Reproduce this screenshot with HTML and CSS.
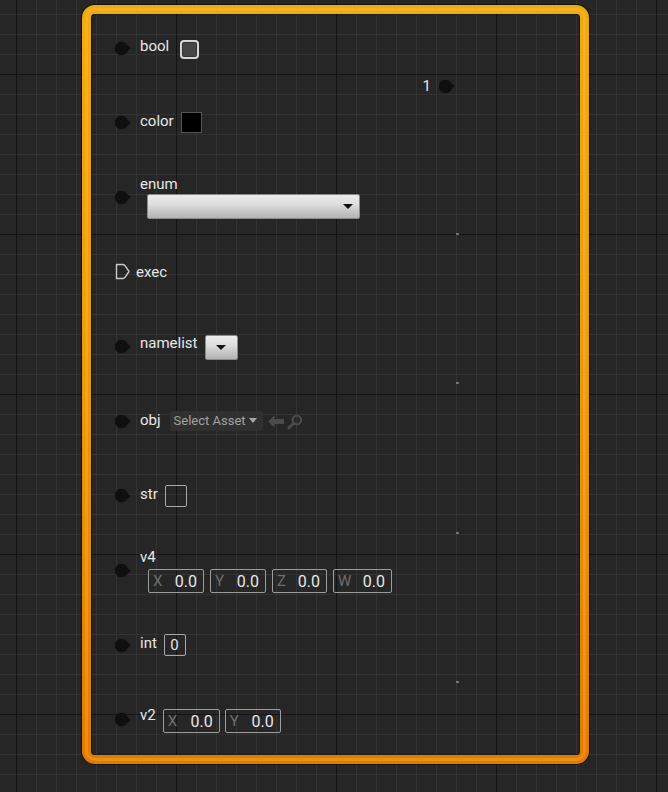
FILE: index.html
```html
<!DOCTYPE html>
<html>
<head>
<meta charset="utf-8">
<link rel="stylesheet" href="styles.css">
</head>
<body>
<div class="node">
  <div class="inputs">
    <div class="row">
      <span class="pin"></span>
      <div class="content">
        <span class="label">bool</span>
        <span class="checkbox"></span>
      </div>
    </div>
    <div class="row">
      <span class="pin"></span>
      <div class="content">
        <span class="label">color</span>
        <span class="swatch"></span>
      </div>
    </div>
    <div class="row">
      <span class="pin"></span>
      <div class="content stack">
        <span class="label">enum</span>
        <span class="combo wide"><span class="tri"></span></span>
      </div>
    </div>
    <div class="row">
      <svg class="exec-pin" width="16" height="17" viewBox="0 0 16 17"><path d="M1.5 1.5 H8 Q9 1.5 10 2.7 L14 8.5 L10 14.3 Q9 15.5 8 15.5 H1.5 Z" fill="none" stroke="#c9c9c9" stroke-width="1.4" stroke-linejoin="round"/></svg>
      <div class="content">
        <span class="label">exec</span>
      </div>
    </div>
    <div class="row">
      <span class="pin"></span>
      <div class="content">
        <span class="label">namelist</span>
        <span class="combo small"><span class="tri"></span></span>
      </div>
    </div>
    <div class="row">
      <span class="pin"></span>
      <div class="content">
        <span class="label">obj</span>
        <span class="asset">Select Asset<span class="tri light"></span></span>
        <span class="asset-icons">
          <svg width="16" height="13" viewBox="0 0 16 13"><path d="M0 6.5 L6.5 0.5 V4 H16 V9 H6.5 V12.5 Z" fill="#4b4b4b"/></svg>
          <svg width="16" height="16" viewBox="0 0 16 16"><circle cx="9.8" cy="6" r="4.3" fill="none" stroke="#4b4b4b" stroke-width="2.2"/><path d="M6.8 9 L2 13.8" stroke="#4b4b4b" stroke-width="3" stroke-linecap="round"/></svg>
        </span>
      </div>
    </div>
    <div class="row">
      <span class="pin"></span>
      <div class="content">
        <span class="label">str</span>
        <span class="textbox"></span>
      </div>
    </div>
    <div class="row">
      <span class="pin"></span>
      <div class="content stack">
        <span class="label">v4</span>
        <div class="fields indent">
          <span class="field w56"><span class="axis">X</span><span class="val">0.0</span></span>
          <span class="field w56"><span class="axis">Y</span><span class="val">0.0</span></span>
          <span class="field w55"><span class="axis">Z</span><span class="val">0.0</span></span>
          <span class="field w59"><span class="axis">W</span><span class="val">0.0</span></span>
        </div>
      </div>
    </div>
    <div class="row">
      <span class="pin"></span>
      <div class="content">
        <span class="label">int</span>
        <span class="textbox num">0</span>
      </div>
    </div>
    <div class="row">
      <span class="pin"></span>
      <div class="content">
        <span class="label">v2</span>
        <div class="fields v2">
          <span class="field w57"><span class="axis">X</span><span class="val">0.0</span></span>
          <span class="field w56"><span class="axis">Y</span><span class="val">0.0</span></span>
        </div>
      </div>
    </div>
  </div>
  <div class="outputs">
    <div class="orow">
      <span class="label">1</span>
      <span class="pin"></span>
    </div>
  </div>
  <span class="dot d1"></span>
  <span class="dot d2"></span>
  <span class="dot d3"></span>
  <span class="dot d4"></span>
</div>
</body>
</html>
```
FILE: styles.css
```css
html, body {
  margin: 0;
  padding: 0;
}
body {
  width: 668px;
  height: 792px;
  overflow: hidden;
  font-family: Roboto, "Liberation Sans", sans-serif;
  background-color: #262626;
  background-image:
    linear-gradient(90deg, #141414 1px, transparent 1px),
    linear-gradient(180deg, #141414 1px, transparent 1px),
    linear-gradient(90deg, #333333 1px, transparent 1px),
    linear-gradient(180deg, #333333 1px, transparent 1px);
  background-size: 160px 100%, 100% 160px, 20px 100%, 100% 20px;
  background-position: 16px 0, 0 74px, 16px 0, 0 14px;
  padding-top: 5px;
  box-sizing: border-box;
}
.node {
  position: relative;
  margin-left: 82px;
  width: 507px;
  height: 759px;
  box-sizing: border-box;
  border: 9px solid transparent;
  border-radius: 13px;
  display: flex;
  background-color: transparent;
  background-image:
    linear-gradient(90deg, #141414 1px, transparent 1px),
    linear-gradient(180deg, #141414 1px, transparent 1px),
    linear-gradient(90deg, #333333 1px, transparent 1px),
    linear-gradient(180deg, #333333 1px, transparent 1px),
    linear-gradient(#262626, #262626),
    linear-gradient(180deg, #f0aa10 0%, #eb9c08 45%, #e27a00 100%);
  background-size: 160px 100%, 100% 160px, 20px 100%, 100% 20px, 100% 100%, 100% 100%;
  background-position: 16px 0, 0 74px, 16px 0, 0 14px, 0 0, 0 0;
  background-attachment: fixed, fixed, fixed, fixed, scroll, scroll;
  background-clip: padding-box, padding-box, padding-box, padding-box, padding-box, border-box;
  background-origin: border-box;
  background-repeat: repeat, repeat, repeat, repeat, no-repeat, no-repeat;
  box-shadow: 0 0 0 1px rgba(0, 0, 0, 0.45), inset 0 0 0 1px rgba(0, 0, 0, 0.4);
}
.node::before {
  content: "";
  position: absolute;
  left: -6px;
  top: -6px;
  right: -6px;
  bottom: -6px;
  border: 3px solid rgba(255, 205, 90, 0.25);
  border-radius: 10px;
  pointer-events: none;
}
.inputs {
  display: flex;
  flex-direction: column;
  gap: 14.67px;
  padding-top: 4px;
  padding-left: 24px;
  flex: 1;
}
.row {
  display: flex;
  align-items: center;
  height: 60px;
}
.pin {
  position: relative;
  width: 18px;
  height: 13px;
  margin-right: 7px;
  flex: none;
}
.pin::before {
  content: "";
  position: absolute;
  left: 0;
  top: 0;
  width: 13px;
  height: 13px;
  border-radius: 50%;
  background: #0f0f0f;
  box-shadow: 0 0 1px rgba(0, 0, 0, 0.8);
}
.pin::after {
  content: "";
  position: absolute;
  left: 12px;
  top: 3.5px;
  border-left: 4px solid #0f0f0f;
  border-top: 3px solid transparent;
  border-bottom: 3px solid transparent;
}
.exec-pin {
  flex: none;
  margin-right: 5px;
  display: block;
}
.content {
  display: flex;
  align-items: flex-start;
  gap: 7px;
}
.content.stack {
  flex-direction: column;
  gap: 0;
}
.label {
  font-size: 15px;
  line-height: 18px;
  color: #e6e6e6;
  white-space: nowrap;
}
.checkbox {
  margin-top: 3px;
  margin-left: 4px;
  width: 19px;
  height: 19px;
  box-sizing: border-box;
  border: 2px solid #d6d6d6;
  border-radius: 4px;
  background: #464646;
  box-shadow: inset 0 0 0 1px #333;
}
.swatch {
  width: 21px;
  height: 21px;
  box-sizing: border-box;
  background: #000;
  border: 1px solid #555;
}
.combo {
  display: flex;
  align-items: center;
  justify-content: flex-end;
  box-sizing: border-box;
  border: 1px solid #8a8a8a;
  border-radius: 2px;
  background: linear-gradient(180deg, #ececec 0%, #dedede 40%, #c4c4c4 75%, #b4b4b4 100%);
}
.combo.wide {
  margin-top: 1px;
  margin-left: 7px;
  width: 213px;
  height: 25px;
  padding-right: 6px;
}
.combo.small {
  width: 33px;
  height: 25px;
  margin-top: 1px;
  justify-content: center;
}
.tri {
  width: 0;
  height: 0;
  border-left: 5px solid transparent;
  border-right: 5px solid transparent;
  border-top: 5px solid #111;
}
.tri.light {
  border-top-color: #a6a6a6;
  border-left-width: 4.5px;
  border-right-width: 4.5px;
  margin-left: 3px;
}
.asset {
  display: flex;
  align-items: center;
  margin-left: 2px;
  height: 20px;
  width: 93px;
  box-sizing: border-box;
  padding-left: 4px;
  border-radius: 3px;
  background: #303030;
  color: #a2a2a2;
  font-size: 13px;
  white-space: nowrap;
}
.asset-icons {
  display: flex;
  align-items: center;
  gap: 3px;
  margin-left: -2px;
  height: 20px;
  padding-top: 1px;
}
.asset-icons svg {
  display: block;
}
.textbox {
  width: 22px;
  height: 22px;
  box-sizing: border-box;
  border: 1px solid #a8a8a8;
  border-radius: 2px;
}
.textbox.num {
  display: flex;
  align-items: center;
  justify-content: center;
  font-size: 15px;
  color: #e6e6e6;
  padding-right: 1px;
}
.fields {
  display: flex;
  gap: 6px;
}
.fields.indent {
  margin-top: 3px;
  margin-left: 8px;
}
.fields.v2 {
  margin-top: 3px;
  gap: 5px;
}
.field {
  display: flex;
  align-items: center;
  justify-content: space-between;
  height: 24px;
  box-sizing: border-box;
  border: 1px solid #9c9c9c;
  border-radius: 2px;
  padding: 0 6px 0 4px;
  font-size: 16px;
}
.w55 { width: 55px; }
.w56 { width: 56px; }
.w57 { width: 57px; }
.w59 { width: 59px; }
.axis {
  color: #6e6e6e;
  font-size: 15px;
}
.val {
  color: #e6e6e6;
}
.outputs {
  padding-top: 63px;
  padding-right: 123px;
}
.orow {
  display: flex;
  align-items: center;
  gap: 8px;
}
.orow .pin {
  margin-right: 0;
}
.dot {
  position: absolute;
  left: 365px;
  width: 3px;
  height: 2px;
  background: linear-gradient(90deg, #8c7c32 0 2px, #4a6ab0 2px 3px);
}
.d1 { top: 219px; }
.d2 { top: 368px; }
.d3 { top: 518px; }
.d4 { top: 667px; }
```
